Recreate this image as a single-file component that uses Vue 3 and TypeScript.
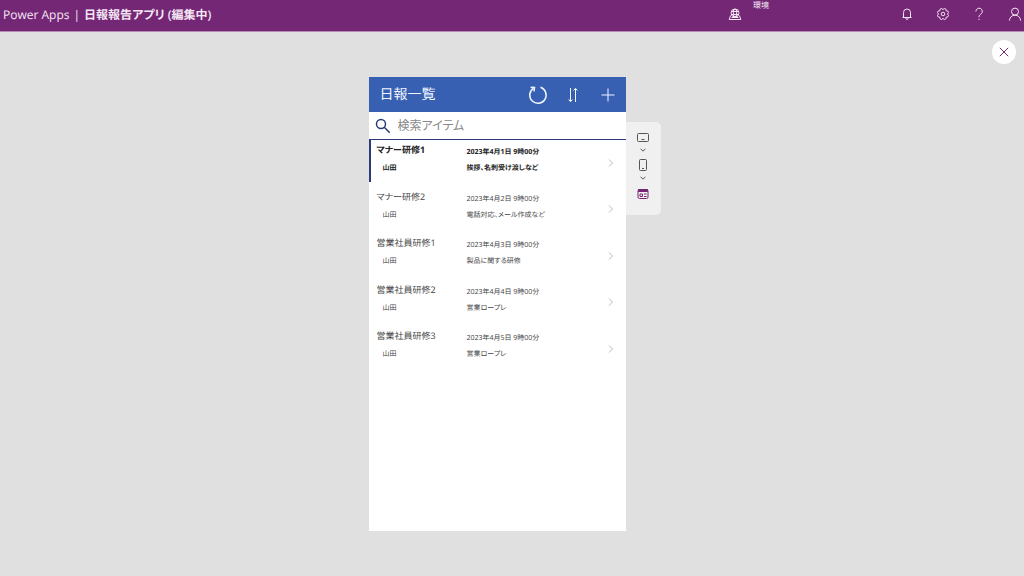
<script setup lang="ts">
import { ref } from 'vue'

interface Report {
  id: number
  title: string
  author: string
  date: string
  body: string
}

const reports: Report[] = [
  { id: 1, title: 'マナー研修1', author: '山田', date: '2023年4月1日 9時00分', body: '挨拶、名刺受け渡しなど' },
  { id: 2, title: 'マナー研修2', author: '山田', date: '2023年4月2日 9時00分', body: '電話対応、メール作成など' },
  { id: 3, title: '営業社員研修1', author: '山田', date: '2023年4月3日 9時00分', body: '製品に関する研修' },
  { id: 4, title: '営業社員研修2', author: '山田', date: '2023年4月4日 9時00分', body: '営業ロープレ' },
  { id: 5, title: '営業社員研修3', author: '山田', date: '2023年4月5日 9時00分', body: '営業ロープレ' },
]

const selected = ref(1)
const query = ref('')
</script>

<template>
  <div class="page">
    <header class="topbar">
      <h1 class="brand"><span class="product">Power Apps</span><span class="product">|</span><span>日報報告アプリ (編集中)</span></h1>
      <div class="environment">
        <svg class="env-icon" width="14" height="14" viewBox="0 0 14 14" aria-hidden="true">
          <circle cx="7" cy="6" r="4" />
          <ellipse cx="7" cy="6" rx="1.7" ry="4" />
          <path d="M3.4 4.5h7.2M3.4 7.5h7.2M2.6 8.5 1.2 12.5h11.6L11.400 8.500M3.500 10.500h7" />
        </svg>
        <span class="env-label">環境</span>
      </div>
      <nav class="actions">
        <button type="button" aria-label="通知">
          <svg width="14" height="14" viewBox="0 0 14 14"><path d="M3.5 10.5V5.5a3.500 3.500 0 0 1 7 0v5M2.500 10.500h9M5.800 11.200a1.200 1.200 0 0 0 2.400 0" /></svg>
        </button>
        <button type="button" aria-label="設定">
          <svg width="14" height="14" viewBox="0 0 14 14">
            <path d="M5.600 1.500 7 2.500l1.400-1 1.500.6.3 1.700 1.700.3.6 1.500-1 1.400 1 1.400-.6 1.500-1.700.3-.3 1.700-1.500.6-1.400-1-1.400 1-1.500-.6-.3-1.700-1.700-.3-.6-1.500 1-1.400-1-1.400.6-1.500 1.700-.3.3-1.700z" />
            <circle cx="7" cy="7" r="1.800" />
          </svg>
        </button>
        <button type="button" aria-label="ヘルプ">
          <svg width="14" height="14" viewBox="0 0 14 14"><path d="M3.900 4.400a3.200 3.200 0 1 1 5.300 2.400C7.800 7.900 7 8.400 7 10.200M7 11.800v1.200" /></svg>
        </button>
        <button type="button" aria-label="アカウント">
          <svg width="14" height="14" viewBox="0 0 14 14"><circle cx="7" cy="4.600" r="3.500" /><path d="M1.400 13.600C1.600 10.400 4 8.100 7 8.100s5.400 2.300 5.600 5.500" /></svg>
        </button>
      </nav>
    </header>

    <main class="stage">
      <button class="close" type="button" aria-label="閉じる">
        <svg width="10" height="10" viewBox="0 0 10 10"><path d="M.8.8l8.400 8.400M9.200.8.8 9.200" /></svg>
      </button>

      <section class="phone">
        <div class="app-header">
          <h2>日報一覧</h2>
          <button type="button" aria-label="更新">
            <svg class="refresh" width="22" height="22" viewBox="0 0 22 22"><path d="M13.500 3.300A8.200 8.200 0 1 1 6.300 4.300M3.600 3.200l3.900.3-.5 4" /></svg>
          </button>
          <button type="button" aria-label="並べ替え">
            <svg width="22" height="22" viewBox="0 0 22 22"><path d="M8.500 4v13M6.600 15.500l1.900 2.200 1.900-2.200M13.500 18V5M11.600 6.500l1.900-2.200 1.900 2.200" /></svg>
          </button>
          <button type="button" aria-label="追加">
            <svg width="22" height="22" viewBox="0 0 22 22"><path d="M11 4.500v13M4.500 11h13" /></svg>
          </button>
        </div>
        <label class="search">
          <svg width="16" height="16" viewBox="0 0 16 16" aria-hidden="true"><circle cx="6" cy="6" r="4.500" /><path d="M9.300 9.300l5.400 5.400" /></svg>
          <input v-model="query" type="text" placeholder="検索アイテム" aria-label="検索アイテム" />
        </label>
        <ul class="list">
          <li v-for="r in reports" :key="r.id">
            <button class="row" :class="{ selected: r.id === selected }" type="button" @click="selected = r.id">
              <span class="col">
                <span class="title">{{ r.title }}</span>
                <span class="author">{{ r.author }}</span>
              </span>
              <span class="col detail">
                <span>{{ r.date }}</span>
                <span>{{ r.body }}</span>
              </span>
              <svg class="chevron" width="6" height="8" viewBox="0 0 6 8" aria-hidden="true"><path d="M1 .5 4.500 4 1 7.500" /></svg>
            </button>
          </li>
        </ul>
      </section>

      <aside class="devices">
        <button type="button" aria-label="タブレット">
          <svg width="14" height="12" viewBox="0 0 14 12"><rect x="1.500" y="1.500" width="11" height="8" rx="1" /><path d="M5.500 7.500h3" /></svg>
          <svg width="6" height="4" viewBox="0 0 6 4"><path d="M.5.700 3 3.200 5.500.700" /></svg>
        </button>
        <button type="button" aria-label="スマートフォン">
          <svg width="14" height="14" viewBox="0 0 14 14"><rect x="3.500" y="1.500" width="7" height="11" rx="1" /><path d="M6 10.500h2" /></svg>
          <svg width="6" height="4" viewBox="0 0 6 4"><path d="M.5.700 3 3.200 5.500.700" /></svg>
        </button>
        <button class="browser" type="button" aria-label="ブラウザー">
          <svg width="14" height="12" viewBox="0 0 14 12"><rect x="2" y="1.500" width="10" height="9" rx="1.500" /><path class="fill" d="M2.500 1.500h9v2h-9z" /><path d="M4 6h2.500v2.500H4zM8 6h2.500M8 8.500h2.500" /></svg>
        </button>
      </aside>
    </main>
  </div>
</template>

<style>
body {
  background: #e0e0e0;
}
</style>

<style scoped>
.page {
  display: flex;
  flex-direction: column;
  min-height: 100vh;
  background: #e0e0e0;
  color: #444;
  font-family: "Open Sans", "Noto Sans CJK JP", sans-serif;
  font-feature-settings: "palt";
  text-rendering: geometricPrecision;
}

button {
  padding: 0;
  border: 0;
  background: none;
  color: inherit;
  font: inherit;
  font-feature-settings: inherit;
  text-rendering: inherit;
  cursor: pointer;
}

svg {
  display: block;
  fill: none;
  stroke: currentColor;
  stroke-width: 1;
}

h1,
h2,
ul {
  margin: 0;
  padding: 0;
  font-weight: 400;
  list-style: none;
}

.topbar {
  display: grid;
  grid-template-columns: 71fr 29fr;
  height: 31px;
  border-bottom: 1px solid #b48cb4;
  background: #742774;
  color: #f4e6f4;
  position: relative;
}

.brand {
  display: flex;
  align-items: center;
  gap: 4px;
  height: 29px;
  padding-left: 3px;
  font-size: 12px;
  font-weight: 600;
  white-space: nowrap;
}

.product {
  font-weight: 500;
}

.environment {
  display: flex;
  gap: 11px;
  padding-left: 1px;
}

.env-icon {
  margin-top: 7px;
}

.env-label {
  font-size: 8px;
  line-height: 12px;
}

.actions {
  position: absolute;
  top: 0;
  right: 2px;
  display: flex;
  gap: 22px;
  height: 28px;
  align-items: center;
}

.stage {
  position: relative;
  display: flex;
  flex: 1;
  justify-content: center;
  align-items: stretch;
  padding: 45px 0 45px 5px;
}

.close {
  position: absolute;
  top: 8px;
  right: 8px;
  display: grid;
  place-items: center;
  width: 24px;
  height: 24px;
  border-radius: 50%;
  background: #fff;
  color: #742774;
}

.phone {
  width: 257px;
  background: #fff;
}

.app-header {
  display: flex;
  align-items: center;
  gap: 13px;
  height: 35px;
  padding: 0 7px 0 11px;
  background: #3860b2;
  color: #f0f5ff;
}

.app-header h2 {
  flex: 1;
  font-size: 14px;
  line-height: 35px;
}

.refresh {
  stroke-width: 1.5;
}

.search {
  display: flex;
  align-items: center;
  gap: 7px;
  height: 27px;
  padding-left: 6px;
  border-bottom: 1px solid #2b3a78;
  color: #2b3a78;
}

.search svg {
  stroke-width: 1.5;
}

.search input {
  flex: 1;
  min-width: 0;
  padding: 0;
  border: 0;
  outline: 0;
  background: none;
  color: #333;
  font: inherit;
  font-feature-settings: inherit;
  font-size: 12px;
}

.search input::placeholder {
  color: #888;
  opacity: 1;
}

.list {
  display: grid;
  grid-template-rows: repeat(5, 1fr);
  height: 233px;
}

.row {
  display: flex;
  width: 100%;
  height: 42px;
  padding: 3px 12px 0 6px;
  border-left: 2px solid transparent;
  text-align: left;
  font-size: 7px;
  line-height: 16px;
}

.row.selected {
  border-left-color: #2b3a78;
  color: #222;
  font-weight: 700;
}

.col {
  display: flex;
  flex-direction: column;
  width: 90px;
}

.title {
  font-size: 9px;
  line-height: 14px;
}

.author {
  padding: 4px 0 0 6px;
}

.detail {
  flex: 1;
  padding-top: 2px;
}

.row .chevron {
  align-self: center;
  color: #bbb;
}

.devices {
  display: flex;
  flex-direction: column;
  align-self: flex-start;
  align-items: center;
  gap: 6px;
  width: 35px;
  margin-top: 45px;
  padding: 10px 0 13px;
  border-radius: 0 5px 5px 0;
  background: #f0f0f0;
  color: #555;
}

.devices button {
  display: flex;
  flex-direction: column;
  align-items: center;
  gap: 4px;
}

.devices .browser {
  padding: 2px 0;
  color: #742774;
}

.fill {
  fill: currentColor;
}
</style>
